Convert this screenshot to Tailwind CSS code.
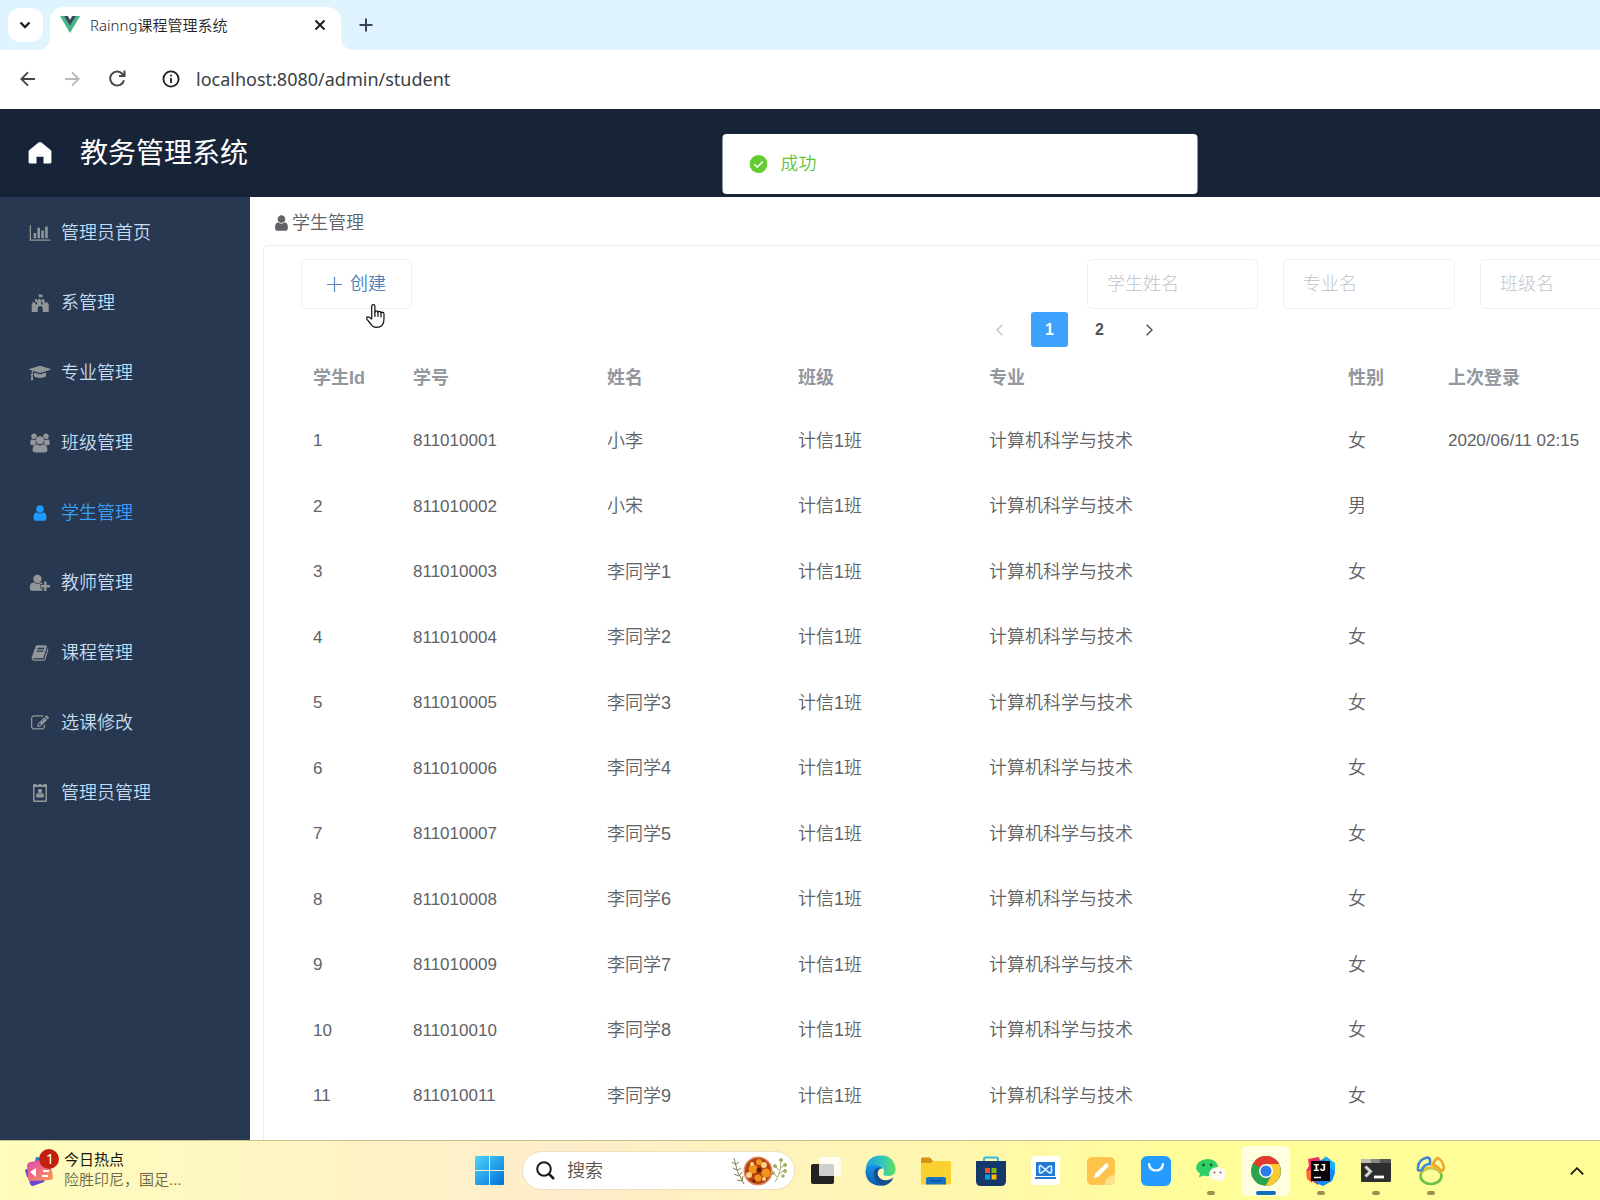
<!DOCTYPE html>
<html lang="zh-CN">
<head>
<meta charset="utf-8">
<meta name="viewport" content="width=device-width, initial-scale=1">
<title>Rainng课程管理系统</title>
<script src="https://cdn.jsdelivr.net/npm/@tailwindcss/browser@4"></script>
</head>
<body class="flex h-screen flex-col overflow-hidden bg-white font-['Liberation_Sans','Noto_Sans_CJK_SC',sans-serif] text-[#606266]">

<!-- Browser tab strip -->
<div class="flex h-[50px] shrink-0 items-end bg-[#dff4ff] font-['Noto_Sans','Noto_Sans_CJK_SC',sans-serif]">
  <div class="flex h-[50px] w-[50px] items-center justify-center">
    <button aria-label="搜索标签页" class="flex h-[34px] w-[35px] items-center justify-center rounded-xl bg-white">
      <svg class="size-3" viewBox="0 0 12 12" fill="none" stroke="#1b1f24" stroke-width="2.4"><path d="M1.5 3.5 6 8l4.500-4.500"/></svg>
    </button>
  </div>
  <div class="relative flex h-[43px] w-[291px] items-center rounded-t-[14px] bg-white pb-2 pl-[10px] pr-[15px]">
    <svg class="absolute -left-3 bottom-0 size-3" viewBox="0 0 12 12"><path d="M12 0v12H0A12 12 0 0 0 12 0z" fill="#fff"/></svg>
    <svg class="absolute -right-3 bottom-0 size-3" viewBox="0 0 12 12"><path d="M0 0v12h12A12 12 0 0 1 0 0z" fill="#fff"/></svg>
    <svg class="h-[17px] w-5" viewBox="0 0 20 17"><path d="M0 0h4l6 10 6-10h4L10 17z" fill="#41b883"/><path d="M4 0h3.800L10 3.700 12.200 0H16l-6 10z" fill="#35495e"/></svg>
    <span class="ml-[10px] text-[15px] font-[350] leading-5 text-[#1f1f1f]">Rainng课程管理系统</span>
    <button aria-label="关闭标签页" class="ml-auto">
      <svg class="size-3" viewBox="0 0 12 12" stroke="#1b1f24" stroke-width="2"><path d="M1.500 1.500l9 9M10.500 1.500l-9 9"/></svg>
    </button>
  </div>
  <button aria-label="新标签页" class="ml-[18px] flex h-[50px] items-center">
    <svg class="size-[14px]" viewBox="0 0 14 14" stroke="#3c4450" stroke-width="2"><path d="M7 0.500v13M.5 7h13"/></svg>
  </button>
</div>

<!-- Address bar -->
<div class="flex h-[59px] shrink-0 items-center bg-white pb-[2px] pl-5 font-['Noto_Sans','Noto_Sans_CJK_SC',sans-serif]">
  <button aria-label="后退"><svg class="h-4 w-[15px]" viewBox="0 0 15 16" fill="none" stroke="#474747" stroke-width="1.900"><path d="M15 8H1.500M8 1.300 1.300 8 8 14.700"/></svg></button>
  <button aria-label="前进" disabled class="ml-[30px]"><svg class="h-4 w-[15px]" viewBox="0 0 15 16" fill="none" stroke="#b9b9b9" stroke-width="1.900"><path d="M0 8h13.500M7 1.300 13.700 8 7 14.700"/></svg></button>
  <button aria-label="重新加载" class="ml-[29px]"><svg class="size-[17px]" viewBox="0 0 17 17" fill="none" stroke="#474747" stroke-width="2"><path d="M15 10.200a7 7 0 1 1-1.700-6.500L15 5.500"/><path d="M15.500.500v5.500H10"/></svg></button>
  <svg class="ml-[36px] size-[18px]" viewBox="0 0 18 18" fill="none" stroke="#1f1f1f" stroke-width="1.800"><circle cx="9" cy="9" r="7.600"/><path d="M9 8v5M9 4.800v1.800"/></svg>
  <input aria-label="地址栏" value="localhost:8080/admin/student" class="ml-4 flex-1 bg-transparent text-lg font-normal text-[#3a3f44] outline-none">
</div>

<!-- Application header -->
<header class="relative flex h-[88px] shrink-0 items-center bg-[#172437] pl-7">
  <a href="#" aria-label="首页"><svg class="h-[22px] w-6" viewBox="0 0 24 22" fill="#fff"><path d="M10.500.600q1.500-1 3 0L22.600 8q.8.700.8 1.800V20q0 1.500-1.500 1.500h-6.400v-6.700h-7v6.700H2.100Q.6 21.500.6 20V9.800q0-1.100.8-1.800z"/></svg></a>
  <h1 class="ml-7 pt-[2px] text-[28px] leading-10 text-white">教务管理系统</h1>
  <div role="alert" class="absolute left-[60%] top-[25px] flex h-[60px] w-[475px] -translate-x-1/2 items-center rounded-[4px] bg-white pl-[27px]">
    <svg class="size-[18px]" viewBox="0 0 18 18"><circle cx="9" cy="9" r="9" fill="#62cc32"/><path d="M4.800 9.200l3 2.900 5.600-5.600" fill="none" stroke="#fff" stroke-width="1.500"/></svg>
    <span class="ml-[13px] text-lg font-[350] text-[#67c23a]">成功</span>
  </div>
</header>

<div class="flex min-h-0 flex-1">
  <!-- Sidebar -->
  <nav class="w-[250px] shrink-0 bg-[#273850] pt-px text-lg font-[350] text-[#c6dcf3]">
    <a href="#" class="flex h-[70px] items-center gap-[10px] pl-[29px]"><svg class="h-[18px] w-[22px] fill-[#929699]" viewBox="0 0 2048 1792"><path d="M640 896v512h-256v-512h256zm384-512v1024h-256v-1024h256zm1024 1152v128h-2048v-1536h128v1408h1920zm-640-896v768h-256v-768h256zm384-384v1152h-256v-1152h256z"/></svg>管理员首页</a>
    <a href="#" class="flex h-[70px] items-center gap-[10px] pl-[29px]"><svg class="h-[18px] w-[22px] fill-[#929699]" viewBox="1 0 22 18"><path d="M10.500 0h.8v.6q2-.4 3.200.2v2.400q-1.500-.6-3.200 0V5h1.200v1.500h1.300V5h2v1.500h1V9h1.200V8h1.500v1.500h1.200V18h-6v-3.500a2.500 2.500 0 0 0-5 0V18h-6V9.500h1V8h1.500v1h1V6.500h-.3V5h2v1.500h1.200V5h1.400zM7.500 8v2.500H9V8zm5.500 0v2.500h1.500V8z" fill-rule="evenodd"/></svg>系管理</a>
    <a href="#" class="flex h-[70px] items-center gap-[10px] pl-[29px]"><svg class="h-[18px] w-[22px] fill-[#929699]" viewBox="0 0 2304 1792"><path d="M1774 836l18 316q4 69-82 128t-235 93.500-323 34.500-323-34.500-235-93.500-82-128l18-316 574 181q22 7 48 7t48-7zm530-324q0 23-22 31l-1120 352q-4 1-10 1t-10-1l-652-206q-43 34-71 111.500t-34 178.500q63 36 63 109 0 69-58 107l58 433q2 14-8 25-9 11-24 11h-192q-15 0-24-11-10-11-8-25l58-433q-58-38-58-107 0-73 65-111 11-207 98-330l-333-104q-22-8-22-31t22-31l1120-352q4-1 10-1t10 1l1120 352q22 8 22 31z"/></svg>专业管理</a>
    <a href="#" class="flex h-[70px] items-center gap-[10px] pl-[29px]"><svg class="h-5 w-[22px] fill-[#929699]" viewBox="0 0 22 20"><circle cx="5" cy="3.200" r="2.700"/><circle cx="17" cy="3.200" r="2.700"/><path d="M3 6.300q2 1.300 4 .2-1 2.500.4 4.300-1.500.2-2.600 1.400H3q-1.800 0-1.800-2 0-3.500 1.800-3.900zM19 6.300q-2 1.300-4 .2 1 2.500-.4 4.300 1.500.2 2.600 1.400H19q1.800 0 1.800-2 0-3.500-1.800-3.900z"/><circle cx="11" cy="7.200" r="3.900"/><path d="M7.500 11.300q3.500 2.300 7 0 3.800.4 3.900 5.500 0 2.700-2.700 2.700H6.300q-2.700 0-2.700-2.700.1-5.100 3.900-5.500z"/></svg>班级管理</a>
    <a href="#" aria-current="page" class="flex h-[70px] items-center gap-[10px] pl-[29px] text-[#3ba0fb]"><svg class="h-[18px] w-[22px] fill-[#1e9bff]" viewBox="0 0 1792 1792"><path d="M1536 1399q0 109-62.500 187t-150.500 78h-854q-88 0-150.500-78t-62.500-187q0-85 8.500-160.500t31.500-152 58.500-131 94-89 134.500-34.500q131 128 313 128t313-128q76 0 134.500 34.500t94 89 58.500 131 31.500 152 8.500 160.500zm-256-887q0 159-112.500 271.500t-271.500 112.500-271.500-112.500-112.500-271.500 112.500-271.500 271.500-112.500 271.500 112.500 112.500 271.500z"/></svg>学生管理</a>
    <a href="#" class="flex h-[70px] items-center gap-[10px] pl-[29px]"><svg class="h-[18px] w-[22px] fill-[#929699]" viewBox="0 0 22 18"><circle cx="8.500" cy="5" r="4.200"/><path d="M4.800 8.600q3.700 2.800 7.400 0 .8 0 1.300.4v1.300h-2.300v4h2.300v2.400H3q-2.300 0-2.300-3 .2-5 4.100-5.100z"/><path d="M15 7.500h2.500V11H21v2.500h-3.500V17H15v-3.500h-3.300V11H15z"/></svg>教师管理</a>
    <a href="#" class="flex h-[70px] items-center gap-[10px] pl-[29px]"><svg class="h-[18px] w-[22px] fill-[#929699]" viewBox="0 0 1792 1792"><path d="M1703 478q40 57 18 129l-275 906q-19 64-76.500 107.500t-122.500 43.500h-923q-77 0-148.500-53.500t-99.500-131.500q-24-67-2-127 0-4 3-27t4-37q1-8-3-21.500t-3-19.500q2-11 8-21t16.500-23.500 16.500-23.500q23-38 45-91.500t30-91.500q3-10 .5-30t-.5-28q3-11 17-28t17-23q21-36 42-92t25-90q1-9-2.500-32t.5-28q4-13 22-30.500t22-22.500q19-26 42.500-84.500t27.500-96.500q1-8-3-25.500t-2-26.500q2-8 9-18t18-23 17-21q8-12 16.500-30.500t15-35 16-36 19.500-32 26.500-23.500 36-11.500 47.500 5.500l-1 3q38-9 51-9h761q74 0 114 56t18 130l-274 906q-36 119-71.500 153.500t-128.500 34.500h-869q-27 0-38 15-11 16-1 43 24 70 144 70h923q29 0 56-15.500t35-41.500l300-987q7-22 5-57 38 15 59 43zm-1064 2q-4 13 2 22.500t20 9.500h608q13 0 25.500-9.500t16.500-22.500l21-64q4-13-2-22.500t-20-9.500h-608q-13 0-25.500 9.500t-16.500 22.500zm-83 256q-4 13 2 22.500t20 9.500h608q13 0 25.500-9.500t16.500-22.500l21-64q4-13-2-22.500t-20-9.500h-608q-13 0-25.500 9.500t-16.500 22.500z"/></svg>课程管理</a>
    <a href="#" class="flex h-[70px] items-center gap-[10px] pl-[29px]"><svg class="h-[18px] w-[22px] fill-[#929699]" viewBox="0 0 1792 1792"><path d="M888 1184l116-116-152-152-116 116v56h96v96h56zm440-720q-16-16-33 1l-350 350q-17 17-1 33t33-1l350-350q17-17 1-33zm80 594v190q0 119-84.500 203.500t-203.500 84.500h-832q-119 0-203.500-84.500t-84.500-203.500v-832q0-119 84.500-203.500t203.500-84.500h832q63 0 117 25 15 7 18 23 3 17-9 29l-49 49q-14 14-32 8-23-6-45-6h-832q-66 0-113 47t-47 113v832q0 66 47 113t113 47h832q66 0 113-47t47-113v-126q0-13 9-22l64-64q15-15 35-7t20 29zm-96-738l288 288-672 672h-288v-288zm444 132l-92 92-288-288 92-92q28-28 68-28t68 28l152 152q28 28 28 68t-28 68z"/></svg>选课修改</a>
    <a href="#" class="flex h-[70px] items-center gap-[10px] pl-[29px]"><svg class="h-[18px] w-[22px] fill-[#929699]" viewBox="0 0 22 18"><path d="M5 0h2.500v1h2V0h3v1h2V0H17q1 0 1 1v16q0 1-1 1H5q-1 0-1-1V1q0-1 1-1zm.500 3v13.500h11V3z" fill-rule="evenodd"/><circle cx="11" cy="7" r="2.200"/><path d="M9 9q2 1.300 4 0 2 .3 2 3.500 0 1-1 1H8q-1 0-1-1Q7 9.300 9 9z"/></svg>管理员管理</a>
  </nav>

  <!-- Student list -->
  <main class="flex min-w-0 flex-1 flex-col overflow-hidden pl-[13px]">
    <h2 class="flex h-12 shrink-0 items-center gap-[3px] pl-[11px] pt-1 text-lg font-[350]"><svg class="h-[18px] w-[15px] fill-[#606266]" viewBox="200 0 1400 1792"><path d="M1536 1399q0 109-62.500 187t-150.500 78h-854q-88 0-150.500-78t-62.500-187q0-85 8.500-160.500t31.500-152 58.500-131 94-89 134.500-34.500q131 128 313 128t313-128q76 0 134.500 34.500t94 89 58.500 131 31.500 152 8.500 160.500zm-256-887q0 159-112.500 271.500t-271.500 112.500-271.500-112.500-112.500-271.500 112.500-271.500 271.500-112.500 271.500 112.500 112.500 271.500z"/></svg>学生管理</h2>
    <section class="flex-1 overflow-hidden rounded-tl-[5px] border-l border-t border-[#ebedf0] pl-[37px] pt-[13px]">
      <div class="flex h-[50px] gap-[25px]">
        <button class="relative mr-auto flex w-[111px] items-center justify-center gap-2 rounded-[5px] border border-[#eff0f3] text-lg font-[350] text-[#4a7fb8]">
          <svg class="size-[15px]" viewBox="0 0 15 15" stroke="#5c88bd" stroke-width="1.200"><path d="M7.500 0v15M0 7.500h15"/></svg>创建
          <svg class="absolute left-[64px] top-[44px] h-6 w-[19px]" viewBox="0 0 19 24" fill="#fff" stroke="#111" stroke-width="1.200" stroke-linejoin="round" stroke-linecap="round"><path d="M5.700 15V2.400q0-1.700 1.600-1.700t1.600 1.700v5.800q.2-1.300 1.500-1.300t1.600 1.500q.3-1 1.500-1t1.500 1.500q.4-.8 1.400-.8 1.600.1 1.600 2V15q0 8.300-7.500 8.300-3.800 0-5.700-3.300L1 15.300q-.9-1.600.3-2.200 1.200-.5 2.300.5z"/><path d="M8.900 8v4.500M12 8.500v4M15 9v3.800" fill="none"/></svg>
        </button>
        <input aria-label="学生姓名" placeholder="学生姓名" class="w-[171px] rounded-[5px] border border-[#eff0f3] px-[19px] text-lg font-light outline-none placeholder:text-[#c0c4cc]">
        <input aria-label="专业名" placeholder="专业名" class="w-[172px] rounded-[5px] border border-[#eff0f3] px-[19px] text-lg font-light outline-none placeholder:text-[#c0c4cc]">
        <input aria-label="班级名" placeholder="班级名" class="w-[120px] rounded-l-[5px] border border-r-0 border-[#eff0f3] px-[19px] text-lg font-light outline-none placeholder:text-[#c0c4cc]">
      </div>
      <div class="mt-[3px] flex h-[35px] justify-end gap-[13px] pr-[432px] text-base font-bold text-[#505358]">
        <button aria-label="上一页" disabled class="flex w-[37px] items-center justify-center"><svg class="h-3 w-[7px]" viewBox="0 0 7 12" fill="none" stroke="#c0c4cc" stroke-width="1.500"><path d="M6.300.7 1 6l5.300 5.300"/></svg></button>
        <button aria-current="page" class="w-[37px] rounded-[3px] bg-[#3da2fe] text-white">1</button>
        <button class="w-[37px]">2</button>
        <button aria-label="下一页" class="flex w-[37px] items-center justify-center"><svg class="h-3 w-[7px]" viewBox="0 0 7 12" fill="none" stroke="#505358" stroke-width="1.500"><path d="M.7.700 6 6 .7 11.300"/></svg></button>
      </div>
      <table class="w-full table-fixed text-left text-lg font-[350]">
        <thead>
          <tr class="h-[61px] font-bold text-[#93979e]">
            <th class="w-[100px] pl-3">学生Id</th>
            <th class="w-[194px] pl-3">学号</th>
            <th class="w-[191px] pl-3">姓名</th>
            <th class="w-[191px] pl-3">班级</th>
            <th class="pl-3">专业</th>
            <th class="w-[100px] pl-3">性别</th>
            <th class="w-[164px] pl-3">上次登录</th>
          </tr>
        </thead>
        <tbody id="students"></tbody>
      </table>
    </section>
  </main>
</div>

<!-- Windows taskbar -->
<footer class="flex h-[60px] shrink-0 border-t border-[#c8bf8e] bg-linear-to-r from-[#fffdbb] via-[#feedcb] via-35% to-[#fffd98] to-75%">
  <button class="flex w-[462px] shrink-0 items-center pb-[2px] pl-6 text-left">
    <svg class="mb-1 h-[38px] w-9" viewBox="0 0 36 38"><defs><linearGradient id="news" x1="0" x2="1" y1="0" y2="1"><stop stop-color="#d946b8"/><stop offset="1" stop-color="#ff9a4a"/></linearGradient></defs><path d="M12 8l14 2-2 10-14-4z" fill="#2d7cc9"/><path d="M4 27l19-1-3 7-11 4q-2 0-3-2z" fill="#6a49d8"/><path d="M1 21l4-2v10l-2-1z" fill="#5843c0"/><path d="M6 13l17-3q5 8 6 19-1 2-3 2L6 32q-2 0-2-2l-1-13q0-3 3-4z" fill="url(#news)"/><path d="M6 23l6-4v9z" fill="#fff"/><path d="M19 22h6M18 27h6" stroke="#fff" stroke-width="1.800"/><circle cx="25" cy="10" r="10" fill="#c3200f"/><text x="22" y="15" fill="#fff" font-size="14" font-family="Noto Sans">1</text></svg>
    <span class="ml-1 text-[15px] leading-5"><span class="block text-[#16150c]">今日热点</span><span class="block font-[350] text-[#6c6748]">险胜印尼，国足...</span></span>
  </button>
  <button aria-label="开始" class="flex w-[55px] shrink-0 items-center justify-center">
    <svg class="size-[29px]" viewBox="0 0 29 29"><defs><linearGradient id="win" x1="0" x2="1" y1="0" y2="1"><stop stop-color="#4fd4ff"/><stop offset="1" stop-color="#006fd6"/></linearGradient></defs><path d="M1 0h13v14H0V1q0-1 1-1zM15 0h13q1 0 1 1v13H15zM0 15h14v14H1q-1 0-1-1zM15 15h14v13q0 1-1 1H15z" fill="url(#win)"/></svg>
  </button>
  <label class="ml-[5px] mr-[3px] mt-[10px] flex h-[39px] w-[273px] shrink-0 items-center rounded-full border border-[#ebe0c0] bg-white pl-[13px] pr-[7px]">
    <svg class="size-[19px]" viewBox="0 0 19 19" fill="none" stroke="#1b1b1b" stroke-width="2"><circle cx="8" cy="8" r="6.800"/><path d="M13 13l5 5" stroke-width="2.500"/></svg>
    <input aria-label="搜索" placeholder="搜索" class="ml-3 w-0 flex-1 text-lg font-[350] outline-none placeholder:text-[#55524c]">
    <svg class="h-[30px] w-14" viewBox="0 0 56 30"><g fill="none" stroke="#7f8257" stroke-width="1"><path d="M3 2q2 14 10 26M4 8L1 6M4 9l4-3M6 14l-4-2M6 15l4-3M8 20l-5-2M8 20l3-4M11 25l-5-1M11 25l1-5"/></g><g stroke="#a5ae65" fill="#a5ae65" stroke-width="1"><path d="M50 4q0 14-6 22M49 12l5-3M48 18l6-4M48 14l-4-4M46 21l-4-5" fill="none"/><circle cx="50" cy="4" r="1.500"/><circle cx="54" cy="9" r="1.500"/><circle cx="54" cy="15" r="1.500"/><circle cx="44" cy="10" r="1.500"/><circle cx="42" cy="17" r="1.500"/><circle cx="52" cy="20" r="1.300"/></g><circle cx="27" cy="15" r="14.500" fill="#e08a66"/><circle cx="27" cy="15" r="13" fill="#b5400f"/><g fill="#f0941c"><circle cx="22" cy="13" r="4.500"/><circle cx="35" cy="17" r="4.500"/><circle cx="27" cy="22" r="3.500"/><circle cx="28" cy="6" r="3"/></g><g fill="#f6d28a"><circle cx="18" cy="19" r="3"/><circle cx="33" cy="9" r="3"/><circle cx="21" cy="8" r="2"/><circle cx="33" cy="23" r="2"/></g><circle cx="28" cy="14" r="2.500" fill="#611e0c"/><circle cx="23" cy="25" r="1.500" fill="#611e0c"/></svg>
  </label>
  <button aria-label="任务视图" class="flex w-[55px] items-center justify-center"><svg class="size-[30px]" viewBox="0 0 30 30"><rect x="0" y="8" width="23" height="20" rx="2" fill="#222"/><rect x="8" y="1" width="22" height="19" rx="1" fill="#fff" opacity=".78"/></svg></button>
  <button aria-label="Edge" class="flex w-[55px] items-center justify-center"><svg class="size-[31px]" viewBox="0 0 31 31"><defs><linearGradient id="ea" x1="0" x2="1"><stop stop-color="#1c9fe8"/><stop offset=".6" stop-color="#35c8b5"/><stop offset="1" stop-color="#67e05a"/></linearGradient><linearGradient id="eb" x1="0" x2="0" y1="0" y2="1"><stop stop-color="#1796e8"/><stop offset="1" stop-color="#0e5ba8"/></linearGradient></defs><path d="M.5 13.500Q3 .5 16 .5T30.700 14q0 7-7 7-6 0-5.300-2.500Q20 16 18 13q-3-4-9-3-6 .5-8.500 3.500z" fill="url(#ea)"/><path d="M.4 16Q1 9.500 9 9.500q7 0 9 4-5 0-5.500 5 0 7 8 8.500 4 .5 7.500-2.500-5 6.300-12.500 6.300Q1 30 .4 16z" fill="url(#eb)"/><path d="M9 17q1-5 7-4.500-5 2-3 8 3 6 10 4.500 3-1 5.500-2.500Q25 29.500 18 30.500 8 27 9 17z" fill="#124f8f"/></svg></button>
  <button aria-label="文件资源管理器" class="flex w-[55px] items-center justify-center"><svg class="h-7 w-[30px]" viewBox="0 0 30 28"><path d="M0 2q0-1.500 1.500-1.500H9L12 4v6H0z" fill="#d49416"/><path d="M0 6h10l2-2h16.500Q30 4 30 5.500V26q0 1.500-1.500 1.500h-27Q0 27.500 0 26z" fill="#fbd031"/><path d="M5 27.500V22q0-2 2-2h16q2 0 2 2v5.500z" fill="#1671c5"/><path d="M9 24h12" stroke="#0d4f94" stroke-width="1.500"/></svg></button>
  <button aria-label="Microsoft Store" class="flex w-[55px] items-center justify-center"><svg class="h-[30px] w-[30px]" viewBox="0 0 30 30"><path d="M8 6V3q0-1.500 1.500-1.500h11Q22 1.500 22 3v3" fill="none" stroke="#32b9e6" stroke-width="2"/><path d="M0 5h30v20q0 5-5 5H5q-5 0-5-5z" fill="#15386b"/><path d="M9 12h5v5H9z" fill="#f25022"/><path d="M15.500 12h5v5h-5z" fill="#7fba00"/><path d="M9 18.500h5v5H9z" fill="#00a4ef"/><path d="M15.500 18.500h5v5h-5z" fill="#ffb900"/></svg></button>
  <button aria-label="电脑管家" class="flex w-[55px] items-center justify-center"><svg class="size-[29px]" viewBox="0 0 29 29"><rect width="29" height="29" rx="4" fill="#fff"/><path d="M5 6h19v14H5zM4 21h21v2H4z" fill="#2479d4"/><path d="M8.500 10q1-1 2.500.5l7 6q2.500 1.500 2.500-1v-4q0-2.500-2.500-1l-7 6q-2.500 1.500-2.500-1z" fill="none" stroke="#d8f0ff" stroke-width="1.600"/></svg></button>
  <button aria-label="便笺" class="flex w-[55px] items-center justify-center"><svg class="size-7" viewBox="0 0 28 28"><rect width="28" height="28" rx="5" fill="#fdc34a"/><path d="M28 18v5q0 5-5 5h-5q0-9 10-10z" fill="#ffe08e"/><path d="M7 21l1-4L18 7q2-1.500 3 0t0 3L11 20z" fill="#fff"/></svg></button>
  <button aria-label="应用商店" class="flex w-[55px] items-center justify-center"><svg class="size-[30px]" viewBox="0 0 30 30"><rect width="30" height="30" rx="6" fill="#259aff"/><path d="M8 8q1 6.500 7 6.500T22 8" fill="none" stroke="#fff" stroke-width="2.200" stroke-linecap="round"/></svg></button>
  <button aria-label="微信" class="relative flex w-[55px] items-center justify-center"><svg class="size-[30px]" viewBox="0 0 30 30"><path d="M11 3q10 0 11 8-8 1-9 9-3 .5-6-.5l-4 2 1-4Q0 15 0 11.500 1 4 11 3z" fill="#2fd066"/><circle cx="7.500" cy="9" r="1.400" fill="#14622f"/><circle cx="15" cy="9" r="1.400" fill="#14622f"/><path d="M21.500 11q8 .5 8.500 7 0 3-2.500 5l.8 3-3.300-1.500Q14 26 13 18q1-6.500 8.500-7z" fill="#fbfbf4"/><circle cx="18.500" cy="16.500" r="1.100" fill="#777"/><circle cx="24.500" cy="16.500" r="1.100" fill="#777"/></svg><span class="absolute bottom-[5px] h-1 w-2 rounded-full bg-[#97924f]"></span></button>
  <button aria-label="Chrome" class="relative flex w-[55px] items-center justify-center"><span class="absolute inset-x-[3px] bottom-1 top-[5px] rounded-md bg-[#fffee0]"></span><svg class="relative size-[30px]" viewBox="0 0 30 30"><circle cx="15" cy="15" r="15" fill="#2ba24c"/><path d="M15 15L2 7.500A15 15 0 0 1 28 7.500z" fill="#e33b2e"/><path d="M15 8h13a15 15 0 0 1-13.500 22L21 18.500z" fill="#fcc934"/><circle cx="15" cy="15" r="7" fill="#fff"/><circle cx="15" cy="15" r="5.500" fill="#2b7de9"/></svg><span class="absolute bottom-[5px] h-1 w-5 rounded-full bg-[#0d6fbe]"></span></button>
  <button aria-label="IntelliJ IDEA" class="relative flex w-[55px] items-center justify-center"><svg class="size-[30px]" viewBox="0 0 30 30"><path d="M2 3l11-2 4 14-5 14-9-6 2-6-5-2 3-5z" fill="#ee2a63"/><path d="M0 16l6-3v14l-5-4z" fill="#fb6b32"/><path d="M13 5l8-4 7 6 1 10-3 8-9 5-7-3z" fill="#1687ef"/><path d="M18 0l11 7v8l-8-5z" fill="#19b5f1"/><rect x="5" y="5" width="19" height="20" fill="#080408"/><text x="7" y="15" fill="#fff" font-size="11" font-weight="bold" font-family="Liberation Mono">IJ</text><path d="M8 21.500h7" stroke="#fff" stroke-width="1.500"/></svg><span class="absolute bottom-[5px] h-1 w-2 rounded-full bg-[#97924f]"></span></button>
  <button aria-label="终端" class="relative flex w-[55px] items-center justify-center"><svg class="h-[23px] w-[30px]" viewBox="0 0 30 23"><rect width="30" height="23" rx="1.500" fill="#2e2e2e"/><path d="M1.500 0h9v4H0V1.500Q0 0 1.500 0z" fill="#bdbdb5"/><path d="M10.500 0h9v4h-9z" fill="#898983"/><path d="M19.500 0h9Q30 0 30 1.500V4H19.500z" fill="#55554f"/><path d="M4.500 7.500l5 5-5 5" fill="none" stroke="#d5d5d5" stroke-width="3"/><path d="M13 18h10" stroke="#fff" stroke-width="2.800"/></svg><span class="absolute bottom-[5px] h-1 w-2 rounded-full bg-[#97924f]"></span></button>
  <button aria-label="Navicat" class="relative flex w-[55px] items-center justify-center"><svg class="h-[30px] w-[29px]" viewBox="0 0 29 30" fill="none" stroke-width="2.600"><ellipse cx="15" cy="20" rx="10.500" ry="8" stroke="#6cc24a"/><path d="M5 17a10.500 8 0 0 1 20 0" stroke="#e9c23a"/><path d="M2 14Q1 4 11 1.500q3 0 3 3V8q-6 0-8 6-2 1-4 0z" stroke="#3f87d2"/><path d="M17 9q1-5 5-7 5 3 6 10-1 3-3 3-3-5-8-6z" stroke="#f0a52b"/></svg><span class="absolute bottom-[5px] h-1 w-2 rounded-full bg-[#97924f]"></span></button>
  <button aria-label="显示隐藏的图标" class="ml-auto pr-4"><svg class="h-2 w-[14px]" viewBox="0 0 14 8" fill="none" stroke="#1b1b10" stroke-width="1.800"><path d="M.8 7.300 7 1.200l6.200 6.100"/></svg></button>
</footer>

<script>
  const students = [
    ['小李', '女', '2020/06/11 02:15'], ['小宋', '男', ''],
    ['李同学1', '女', ''], ['李同学2', '女', ''], ['李同学3', '女', ''],
    ['李同学4', '女', ''], ['李同学5', '女', ''], ['李同学6', '女', ''],
    ['李同学7', '女', ''], ['李同学8', '女', ''], ['李同学9', '女', ''],
  ];
  document.getElementById('students').innerHTML = students.map(([name, sex, login], i) => `
    <tr class="odd:h-[65px] even:h-[66px]">
      <td class="pl-3 pt-[2px] text-[17px]">${i + 1}</td>
      <td class="pl-3 pt-[2px] text-[17px]">${811010001 + i}</td>
      <td class="pl-3">${name}</td>
      <td class="pl-3">计信1班</td>
      <td class="pl-3">计算机科学与技术</td>
      <td class="pl-3">${sex}</td>
      <td class="whitespace-nowrap pl-3 pt-[2px] text-[17px]">${login}</td>
    </tr>`).join('');
</script>
</body>
</html>
